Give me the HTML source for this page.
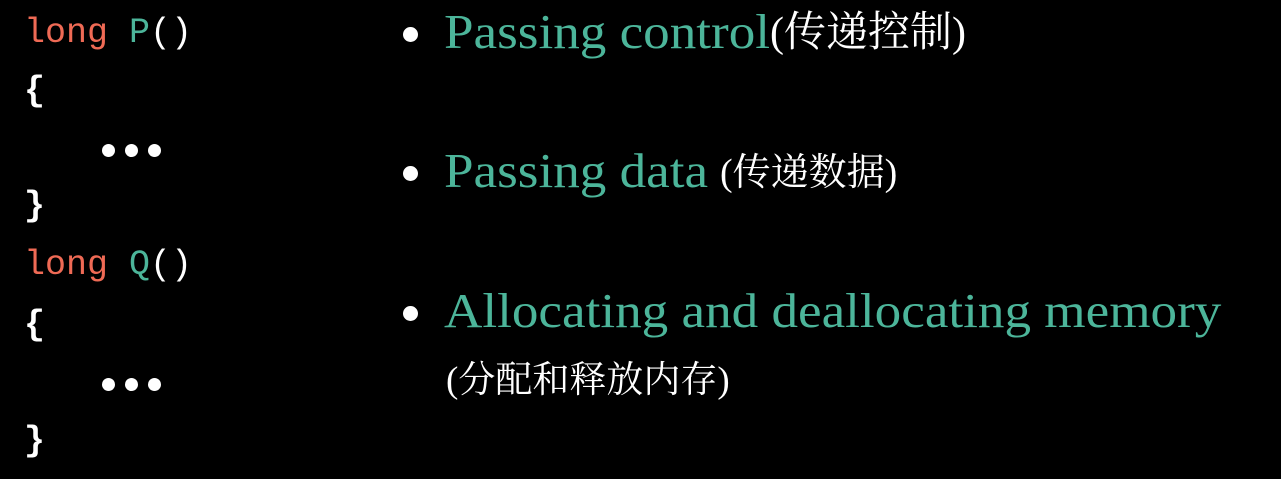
<!DOCTYPE html>
<html><head><meta charset="utf-8"><style>
body{margin:0;width:1281px;height:479px;background:#000;overflow:hidden;position:relative}
.c{position:absolute;left:24px;font-family:"Liberation Mono",monospace;font-size:35px;line-height:40px;color:#fff;white-space:pre}
.r{color:#ef6a55}.t{color:#4cb59a}
.b{font-weight:bold}
.dot{position:absolute;width:15px;height:15px;border-radius:50%;background:#fff}
.e{position:absolute;width:13px;height:13px;border-radius:50%;background:#fff}
.s{position:absolute;left:444px;font-family:"Liberation Serif",serif;font-size:49px;line-height:50px;color:#4cb59a;white-space:nowrap;transform-origin:0 0;transform:scaleX(1.084)}
.z{position:absolute;font-family:"Liberation Serif","Noto Serif CJK SC",serif;line-height:1;color:#fff;white-space:nowrap}
</style></head><body>
<div class="c" style="top:13px"><span class="r">long</span> <span class="t">P</span>()</div>
<div class="c b" style="top:71px">{</div>
<div class="e" style="left:102px;top:144px"></div><div class="e" style="left:125px;top:144px"></div><div class="e" style="left:148px;top:144px"></div>
<div class="c b" style="top:186px">}</div>
<div class="c" style="top:245px"><span class="r">long</span> <span class="t">Q</span>()</div>
<div class="c b" style="top:305px">{</div>
<div class="e" style="left:102px;top:378px"></div><div class="e" style="left:125px;top:378px"></div><div class="e" style="left:148px;top:378px"></div>
<div class="c b" style="top:421px">}</div>

<div class="dot" style="left:403px;top:27px"></div>
<div class="s" style="top:7px">Passing control</div>
<div class="z" style="left:770px;top:12px;font-size:42px">(传递控制)</div>
<div class="dot" style="left:403px;top:166px"></div>
<div class="s" style="top:146px">Passing data</div>
<div class="z" style="left:720px;top:154px;font-size:38px">(传递数据)</div>
<div class="dot" style="left:403px;top:306px"></div>
<div class="s" style="top:286px">Allocating and deallocating memory</div>
<div class="z" style="top:362px;left:446px;font-size:37px">(分配和释放内存)</div>
</body></html>
